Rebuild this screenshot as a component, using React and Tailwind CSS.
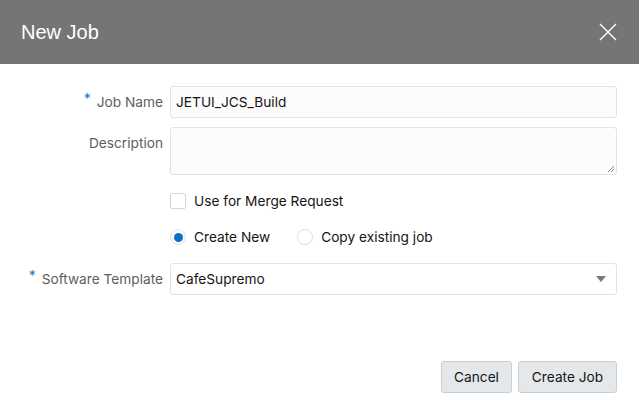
import React from "react";

const font = { fontFamily: 'Inter, "Liberation Sans", Arial, sans-serif' };
const titleFont = { fontFamily: '"Liberation Sans", Arial, sans-serif' };

export default function App() {
  return (
    <div className="w-[639px] h-[417px] bg-white flex flex-col" style={font}>
      <div className="h-[64px] bg-[#757575] flex items-center justify-between pl-[21px] pr-[22px] shrink-0">
        <span className="text-white text-[20px] leading-none" style={titleFont}>New Job</span>
        <svg width="18" height="18" viewBox="0 0 18 18" className="mt-[-1px]">
          <path d="M1 1 L17 17 M17 1 L1 17" stroke="#ffffff" strokeWidth="1.4" fill="none" />
        </svg>
      </div>
      <div className="flex flex-col pt-[22px] pr-[22px] text-[13.7px]">
        <div className="flex items-center h-[32px]">
          <div className="w-[163px] shrink-0 flex justify-end items-center text-[#5e5e5e]">
            <span className="text-[#1c73c9] text-[14px] leading-none mr-[6px] mt-[-6px]">*</span>
            <span>Job Name</span>
          </div>
          <div className="ml-[7px] flex-1 h-[32px] border border-[#e2e2e2] rounded-[3px] bg-[#fcfcfc] flex items-center px-[5px] text-[#161513]">
            JETUI_JCS_Build
          </div>
        </div>
        <div className="flex items-start h-[48px] mt-[9px]">
          <div className="w-[163px] shrink-0 flex justify-end pt-[8px] text-[#5e5e5e] leading-[16px]">
            Description
          </div>
          <div className="ml-[7px] flex-1 h-[48px] border border-[#e2e2e2] rounded-[3px] bg-[#fcfcfc] relative">
            <svg width="8" height="8" viewBox="0 0 8 8" className="absolute right-[1px] bottom-[1px]">
              <path d="M7 1 L1 7 M7 4 L4 7" stroke="#808080" strokeWidth="0.9" />
            </svg>
          </div>
        </div>
        <div className="flex items-center mt-[18px] ml-[170px] h-[16px]">
          <div className="w-[16px] h-[16px] border border-[#d6d6d6] rounded-[2px] bg-white" />
          <span className="ml-[8px] text-[#161513]">Use for Merge Request</span>
        </div>
        <div className="flex items-center mt-[20px] ml-[170px] h-[16px]">
          <div className="w-[16px] h-[16px] rounded-full border border-[#e0e0e0] bg-white flex items-center justify-center">
            <div className="w-[9px] h-[9px] rounded-full bg-[#0572ce]" />
          </div>
          <span className="ml-[8px] text-[#161513]">Create New</span>
          <div className="ml-[27px] w-[16px] h-[16px] rounded-full border border-[#e0e0e0] bg-white" />
          <span className="ml-[8px] text-[#161513]">Copy existing job</span>
        </div>
        <div className="flex items-center h-[32px] mt-[18px]">
          <div className="w-[163px] shrink-0 flex justify-end items-center text-[#5e5e5e]">
            <span className="text-[#1c73c9] text-[14px] leading-none mr-[6px] mt-[-6px]">*</span>
            <span>Software Template</span>
          </div>
          <div className="ml-[7px] flex-1 h-[32px] border border-[#e2e2e2] rounded-[3px] bg-white flex items-center justify-between pl-[5px] pr-[10px] text-[#161513]">
            <span>CafeSupremo</span>
            <svg width="10" height="6" viewBox="0 0 10 6">
              <path d="M0 0 L10 0 L5 6 Z" fill="#7a7a7a" />
            </svg>
          </div>
        </div>
        <div className="flex justify-end gap-[6px] mt-[66px]">
          <button className="w-[71px] h-[32px] bg-[#e4e8eb] border border-[#c9cfd4] rounded-[3px] text-[#161513]">
            Cancel
          </button>
          <button className="w-[99px] h-[32px] bg-[#e4e8eb] border border-[#c9cfd4] rounded-[3px] text-[#161513]">
            Create Job
          </button>
        </div>
      </div>
    </div>
  );
}
